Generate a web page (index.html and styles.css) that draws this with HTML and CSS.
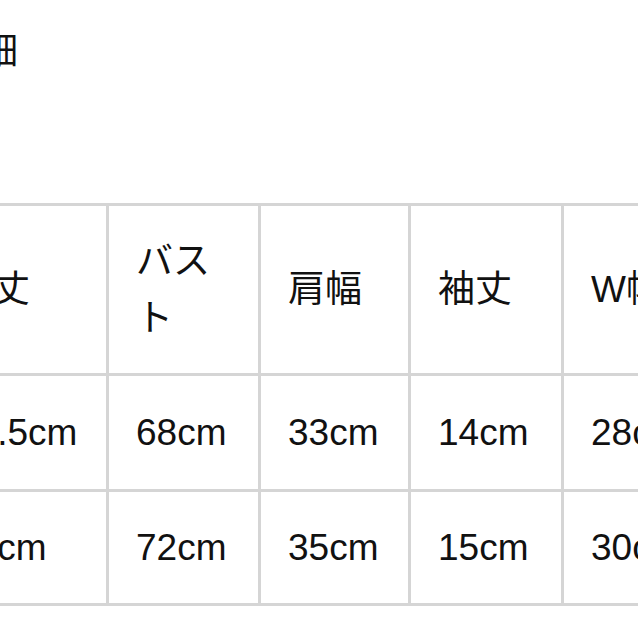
FILE: index.html
```html
<!DOCTYPE html>
<html lang="ja">
<head>
<meta charset="utf-8">
<link rel="stylesheet" href="styles.css">
</head>
<body>
<div class="page">
  <div class="title">詳細</div>
  <div class="table-wrap">
    <table class="size-table">
      <colgroup>
        <col class="c-first">
        <col class="c-a">
        <col class="c-b">
        <col class="c-c">
        <col class="c-d">
      </colgroup>
      <tr class="head">
        <td>着丈</td>
        <td>バスト</td>
        <td>肩幅</td>
        <td>袖丈</td>
        <td>W幅</td>
      </tr>
      <tr class="r1">
        <td>58.5cm</td>
        <td>68cm</td>
        <td>33cm</td>
        <td>14cm</td>
        <td>28cm</td>
      </tr>
      <tr class="r2">
        <td>60cm</td>
        <td>72cm</td>
        <td>35cm</td>
        <td>15cm</td>
        <td>30cm</td>
      </tr>
    </table>
  </div>
</div>
</body>
</html>
```

FILE: styles.css
```css
html, body {
  margin: 0;
  padding: 0;
  background: #ffffff;
}
body {
  width: 638px;
  height: 638px;
  overflow: hidden;
  font-family: "Liberation Sans", "Noto Sans CJK JP", sans-serif;
  color: #111111;
}
.page {
  padding-top: 31px;
}
.title {
  font-size: 37px;
  line-height: 42px;
  margin-left: -56px;
  white-space: nowrap;
}
.table-wrap {
  margin-top: 130px;
  margin-left: -74px;
}
.size-table {
  border-collapse: collapse;
  table-layout: fixed;
  width: 787px;
  font-size: 37px;
}
.c-first { width: 180px; }
.c-a { width: 152px; }
.c-b { width: 150px; }
.c-c { width: 153px; }
.c-d { width: 152px; }
.size-table td {
  border: 3px solid #d5d5d5;
  padding: 0 20px 0 27px;
  vertical-align: middle;
  text-align: left;
  line-height: 57px;
  white-space: normal;
}
.head td { height: 167px; }
.r1 td { height: 113px; }
.r2 td { height: 111px; }
```
